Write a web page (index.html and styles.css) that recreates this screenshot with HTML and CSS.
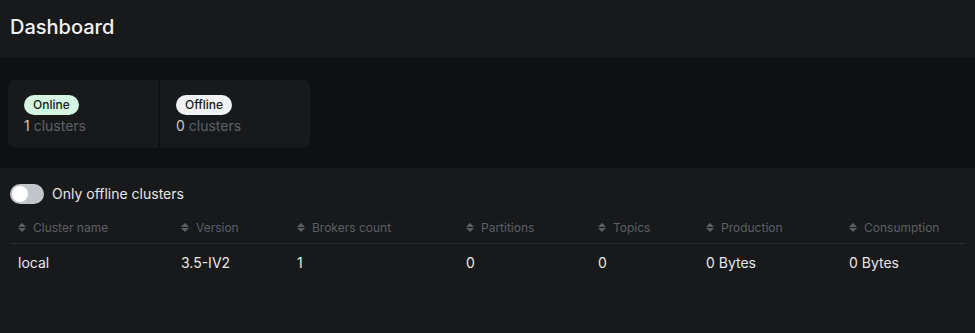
FILE: index.html
```html
<!DOCTYPE html>
<html>
<head lang="en">
    <meta charset="UTF-8">
    <title>Dashboard</title>
    <link rel="stylesheet" href="styles.css">
</head>
<body>
<div class="page-head">
    <h1>Dashboard</h1>
</div>
<!--统计卡片-->
<div class="metrics">
    <div class="cards">
        <div class="card">
            <span class="tag tag-online">Online</span>
            <div class="count"><em>1</em> clusters</div>
        </div>
        <div class="card">
            <span class="tag tag-offline">Offline</span>
            <div class="count"><em>0</em> clusters</div>
        </div>
    </div>
</div>
<div class="content">
    <!--开关-->
    <label class="switch-row">
        <span class="switch"><span class="knob"></span></span>
        <span>Only offline clusters</span>
    </label>
    <!--表格-->
    <div class="table">
        <div class="row head">
            <div class="cell"><i class="sort"></i>Cluster name</div>
            <div class="cell"><i class="sort"></i>Version</div>
            <div class="cell"><i class="sort"></i>Brokers count</div>
            <div class="cell"><i class="sort"></i>Partitions</div>
            <div class="cell"><i class="sort"></i>Topics</div>
            <div class="cell"><i class="sort"></i>Production</div>
            <div class="cell"><i class="sort"></i>Consumption</div>
        </div>
        <div class="row">
            <div class="cell">local</div>
            <div class="cell">3.5-IV2</div>
            <div class="cell">1</div>
            <div class="cell">0</div>
            <div class="cell">0</div>
            <div class="cell">0 Bytes</div>
            <div class="cell">0 Bytes</div>
        </div>
    </div>
</div>
</body>
</html>
```

FILE: styles.css
```css
*{
    margin:0;
    padding:0;
    box-sizing:border-box;
}
body{
    background-color:#18191b;
    font-family:Inter,"Noto Sans",sans-serif;
    color:#e6e7e9;
}
.page-head{
    height:58px;
    padding:0 10px;
    display:flex;
    align-items:center;
    background-color:#18191b;
}
.page-head h1{
    font-size:20px;
    font-weight:500;
    color:#f2f2f3;
    margin-top:-4px;
}
.metrics{
    height:110px;
    padding:22px 8px 0;
    background-color:#0f1012;
}
.cards{
    display:inline-flex;
    gap:2px;
    border-radius:8px;
    overflow:hidden;
}
.card{
    width:150px;
    height:68px;
    padding:13px 16px 0;
    background-color:#18191b;
}
.tag{
    display:inline-block;
    height:20px;
    line-height:20px;
    padding:0 9px;
    border-radius:10px;
    font-size:12px;
    font-weight:500;
    color:#17191c;
}
.tag-online{
    background-color:#d5f6e1;
}
.tag-offline{
    background-color:#f1f2f3;
}
.count{
    margin-top:1px;
    font-size:14px;
    line-height:20px;
    color:#5d6167;
}
.count em{
    font-style:normal;
    color:#c8c9cc;
}
.content{
    padding:16px 10px 0;
}
.switch-row{
    display:flex;
    align-items:center;
    gap:8px;
    font-size:14px;
    line-height:20px;
    color:#e6e7e9;
}
.switch{
    width:34px;
    height:20px;
    border-radius:10px;
    background-color:#c2c6ca;
    padding:2px;
    display:flex;
}
.knob{
    width:16px;
    height:16px;
    border-radius:50%;
    background-color:#fff;
}
.table{
    margin-top:8px;
}
.row{
    display:grid;
    grid-template-columns:163px 116px 169px 132px 108px 143px 1fr;
    height:36px;
    align-items:center;
    font-size:14px;
    color:#e6e7e9;
}
.row.head{
    height:32px;
    font-size:12px;
    color:#5b5f65;
    border-bottom:1px solid #2b2c30;
}
.cell{
    padding-left:8px;
    display:flex;
    align-items:center;
    white-space:nowrap;
}
.sort{
    width:8px;
    height:9px;
    margin-right:7px;
    position:relative;
}
.sort:before,
.sort:after{
    content:'';
    position:absolute;
    left:0;
    border-left:4px solid transparent;
    border-right:4px solid transparent;
}
.sort:before{
    top:0;
    border-bottom:4px solid #5b5f65;
}
.sort:after{
    bottom:0;
    border-top:4px solid #5b5f65;
}
```
